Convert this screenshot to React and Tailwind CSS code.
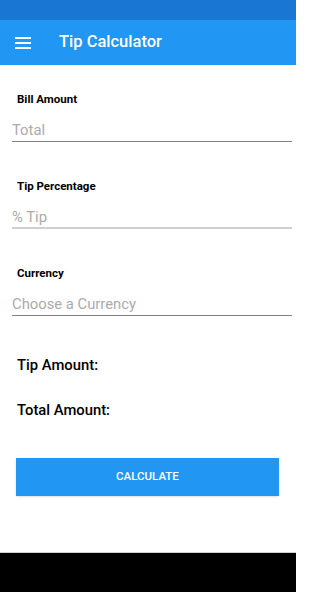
import React from "react";

function Field({ label, placeholder, lineClass, pb }) {
  return (
    <div className="flex flex-col">
      <div className="pl-[17px] text-[11.5px] leading-[13px] font-bold text-black">{label}</div>
      <div className={`ml-[12px] mr-[4px] mt-[14px] ${pb} ${lineClass}`}>
        <div className="text-[14.8px] leading-[20px] text-[#ababab] font-normal">{placeholder}</div>
      </div>
    </div>
  );
}

export default function App() {
  return (
    <div className="w-[296px] h-[592px] flex flex-col bg-white" style={{ fontFamily: "Roboto, 'Liberation Sans', sans-serif" }}>
      <div className="h-[20px] bg-[#1976d2]" />
      <div className="h-[45px] bg-[#2196f3] flex items-center">
        <svg className="ml-[15px]" width="16" height="14" viewBox="0 0 16 14">
          <rect x="0" y="1" width="16" height="2" fill="white" />
          <rect x="0" y="6" width="16" height="2" fill="white" />
          <rect x="0" y="11" width="16" height="2" fill="white" />
        </svg>
        <div className="ml-[28px] text-white text-[16.5px] font-medium">Tip Calculator</div>
      </div>
      <div className="flex-1 flex flex-col">
        <div className="pt-[28px] flex flex-col gap-[38px]">
          <Field label="Bill Amount" placeholder="Total" pb="pb-[1px]" lineClass="border-b border-[#808080]" />
          <Field label="Tip Percentage" placeholder="% Tip" pb="pb-[0px]" lineClass="border-b-2 border-[#cfcfcf]" />
          <Field label="Currency" placeholder="Choose a Currency" pb="pb-[1px]" lineClass="border-b border-[#808080]" />
        </div>
        <div className="mt-[39px] pl-[17px] text-[14.8px] leading-[20px] font-medium text-black">Tip Amount:</div>
        <div className="mt-[25px] pl-[17px] text-[14.8px] leading-[20px] font-medium text-black">Total Amount:</div>
        <button className="mt-[38px] ml-[16px] w-[263px] h-[38px] bg-[#2196f3] text-white text-[11.5px] font-medium flex items-center justify-center shadow-sm">
          CALCULATE
        </button>
      </div>
      <div className="h-[40px] bg-black border-t border-[#d0d0d0]" />
    </div>
  );
}
